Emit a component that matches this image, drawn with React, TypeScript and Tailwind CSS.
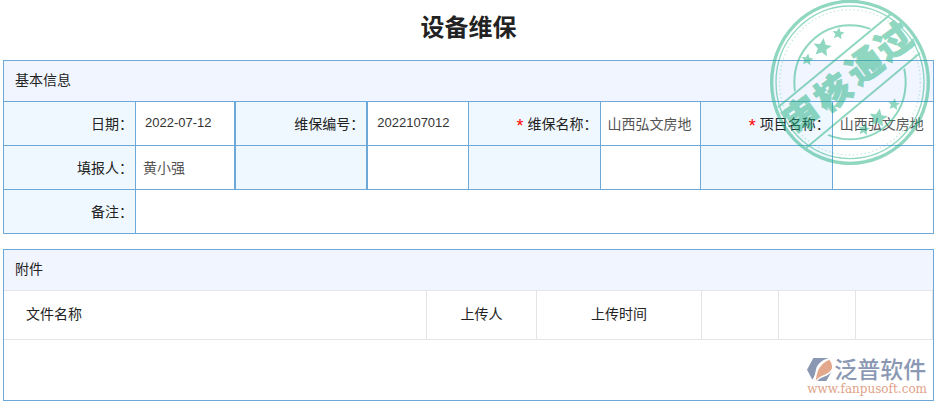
import type { ReactNode } from "react";

const ATTACHMENT_COLUMNS = [
  { title: "文件名称", className: "pl-[22px] text-left" },
  { title: "上传人", className: "w-[110px] text-center" },
  { title: "上传时间", className: "w-[165px] text-center" },
  { title: "", className: "w-[77px]" },
  { title: "", className: "w-[77px]" },
  { title: "", className: "w-[77px]" },
];

const STARS = [
  { x: 112, y: 179, size: 19 },
  { x: 157, y: 143, size: 29 },
  { x: 205, y: 101, size: 19 },
  { x: 282, y: 388, size: 19 },
  { x: 325, y: 354, size: 29 },
  { x: 372, y: 313, size: 19 },
];

const STAMP_CHARS = [
  { char: "审", x: 95, y: 345 },
  { char: "核", x: 189, y: 278 },
  { char: "通", x: 284, y: 196 },
  { char: "过", x: 371, y: 124 },
];

const STAR_POINTS = "0,-1 0.29,-0.34 0.95,-0.31 0.45,0.14 0.59,0.81 0,0.47 -0.59,0.81 -0.45,0.14 -0.95,-0.31 -0.29,-0.34";

type FieldProps = {
  id: string;
  label: string;
  value?: string;
  required?: boolean;
  numeric?: boolean;
  labelClass?: string;
  valueClass?: string;
};

function Field({
  id,
  label,
  value = "",
  required,
  numeric,
  labelClass = "border-r",
  valueClass = "border-r",
}: FieldProps) {
  return (
    <>
      <label
        htmlFor={id}
        className={`flex h-11 items-center justify-end border-b border-[#6ca9d9] bg-[#f0f8ff] pr-0.5 pb-0.5 text-[#222] ${labelClass}`}
      >
        {required && <span className="mr-1 pt-1.5 font-['Liberation_Sans'] text-lg leading-none text-[#f00]">*</span>}
        {label}：
      </label>
      <div className={`flex h-11 min-w-0 border-b border-[#6ca9d9] ${valueClass}`}>
        <input
          id={id}
          defaultValue={value}
          className={
            numeric
              ? "w-full min-w-0 bg-transparent pl-[9px] font-['Liberation_Sans'] text-[13px] text-[#333] outline-none"
              : "w-full min-w-0 bg-transparent pl-[7px] pb-0.5 text-[#555] outline-none"
          }
        />
      </div>
    </>
  );
}

function EmptyPair({ labelClass = "border-r", valueClass = "border-r" }: { labelClass?: string; valueClass?: string }) {
  return (
    <>
      <div className={`h-11 border-b border-[#6ca9d9] bg-[#f0f8ff] ${labelClass}`} />
      <div className={`h-11 border-b border-[#6ca9d9] ${valueClass}`} />
    </>
  );
}

function Panel({ title, headerClass, children }: { title: string; headerClass: string; children: ReactNode }) {
  return (
    <section className="border border-[#6ca9d9]">
      <h2 className={`flex h-[41px] items-center border-b bg-[#f1f5ff] pb-1 pl-[11px] text-[#222] ${headerClass}`}>
        {title}
      </h2>
      {children}
    </section>
  );
}

function ApprovedStamp() {
  return (
    <svg
      viewBox="0 0 480 496"
      className="pointer-events-none absolute top-0 right-[7px] w-40 text-[#21b082] opacity-50"
      fill="none"
      stroke="currentColor"
      role="img"
      aria-label="审核通过"
    >
      <defs>
        <clipPath id="outside-band">
          <path d="M0 0H406L0 335Z M480 496V138L70 496Z" />
        </clipPath>
      </defs>
      <ellipse cx="240" cy="247" rx="235" ry="243" strokeWidth="10" />
      <ellipse cx="240" cy="247" rx="222" ry="229" strokeWidth="4" />
      <ellipse cx="240" cy="247" rx="211" ry="218" strokeWidth="4" strokeDasharray="4 8" opacity="0.5" />
      <ellipse cx="240" cy="247" rx="167" ry="171" strokeWidth="6" clipPath="url(#outside-band)" />
      <path d="M24 322L362 43M108 444L450 159" strokeWidth="6" />
      {STARS.map((star) => (
        <polygon
          key={star.x}
          points={STAR_POINTS}
          fill="currentColor"
          stroke="none"
          transform={`translate(${star.x} ${star.y}) rotate(8) scale(${star.size})`}
        />
      ))}
      {STAMP_CHARS.map(({ char, x, y }) => (
        <text
          key={char}
          transform={`translate(${x} ${y}) rotate(-36)`}
          textAnchor="middle"
          dy="39"
          fill="currentColor"
          strokeWidth="3"
          className="font-['Noto_Sans_CJK_SC',sans-serif] text-[106px] font-black"
        >
          {char}
        </text>
      ))}
    </svg>
  );
}

function Watermark() {
  return (
    <div className="pointer-events-none absolute right-[7px] bottom-1.5 text-[#8b98b3]">
      <div className="flex h-[26px] items-center gap-0.5">
        <svg viewBox="0 0 75 75" className="mb-0.5 w-[25px]" aria-hidden="true">
          <path d="M19 3H66C46 8 31 20 27 37C25 48 23 59 16 68L0 38Z" fill="#8b98b3" />
          <path d="M67 8C73 15 76 25 75 34C69 47 58 52 46 56C37 60 31 64 26 72C28 58 30 48 35 37C41 25 53 14 67 8Z" fill="#e3a88c" />
          <path d="M75 41L58 72H31C37 64 46 62 54 58C63 55 70 50 75 41Z" fill="#8b98b3" />
        </svg>
        <span className="font-['Liberation_Sans','Noto_Sans_CJK_SC',sans-serif] text-[23px] leading-[26px] font-medium">
          泛普软件
        </span>
      </div>
      <div className="font-['DejaVu_Serif',serif] text-xs leading-3 text-[#dfa288]">www.fanpusoft.com</div>
    </div>
  );
}

export default function App() {
  return (
    <main className="relative bg-white px-[3px] pb-0.5 font-['Noto_Sans_CJK_SC',sans-serif] text-sm">
      <h1 className="h-15 text-center text-2xl leading-[52px] font-bold text-[#222]">设备维保</h1>

      <Panel title="基本信息" headerClass="border-[#6ca9d9]">
        <form className="grid grid-cols-[132px_1fr_132px_1fr_132px_1fr_132px_1fr]">
          <Field id="date" label="日期" value="2022-07-12" numeric valueClass="border-r-2" />
          <Field id="code" label="维保编号" value="2022107012" numeric labelClass="border-r-2" />
          <Field id="name" label="维保名称" value="山西弘文房地" required />
          <Field id="project" label="项目名称" value="山西弘文房地" required valueClass="" />

          <Field id="reporter" label="填报人" value="黄小强" valueClass="border-r-2" />
          <EmptyPair labelClass="border-r-2" />
          <EmptyPair />
          <EmptyPair valueClass="" />

          <label
            htmlFor="remark"
            className="flex h-[43px] items-center justify-end border-r border-[#6ca9d9] bg-[#f0f8ff] pr-0.5 pb-0.5 text-[#222]"
          >
            备注：
          </label>
          <input id="remark" className="col-span-7 min-w-0 bg-transparent pl-[7px] text-[#555] outline-none" />
        </form>
      </Panel>

      <div className="relative mt-[15px]">
        <Panel title="附件" headerClass="border-[#e5e5e5]">
          <table className="w-full table-fixed border-separate border-spacing-0 text-[#222]">
            <thead>
              <tr>
                {ATTACHMENT_COLUMNS.map((column, index) => (
                  <th
                    key={index}
                    className={`h-[49px] border-r border-b border-[#e5e5e5] pb-1 font-normal ${column.className}`}
                  >
                    {column.title}
                  </th>
                ))}
              </tr>
            </thead>
            <tbody>
              <tr>
                <td colSpan={6} className="h-15" />
              </tr>
            </tbody>
          </table>
        </Panel>
        <Watermark />
      </div>

      <ApprovedStamp />
    </main>
  );
}
